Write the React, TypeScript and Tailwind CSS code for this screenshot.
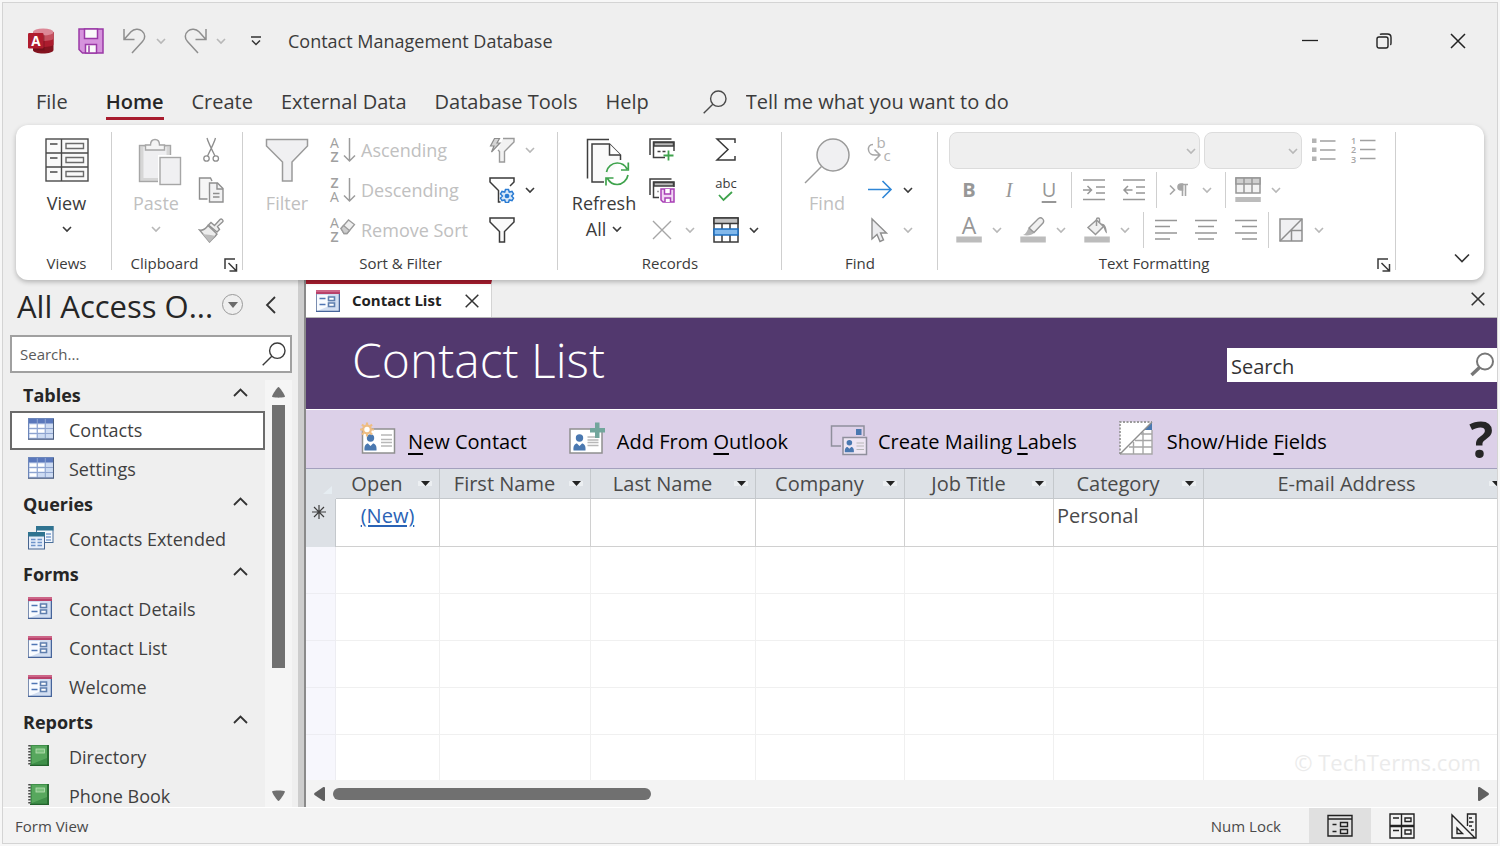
import React, { useState } from 'react';
import clsx from 'clsx';

type IconProps = { className?: string };

const Chevron = ({ className = 'text-[#3b3b3b]' }: IconProps) => (
  <svg width="10" height="10" viewBox="0 0 10 10" fill="none" stroke="currentColor" strokeWidth="1.6" className={clsx('shrink-0', className)}>
    <path d="M1 3l4 4 4-4" />
  </svg>
);

const AccessLogo = () => (
  <svg width="26" height="26" viewBox="0 0 26 26">
    <path d="M5 4v18c0 2 4.500 3.500 10 3.500S25.500 24 25.500 22V4z" fill="#84131f" />
    <path d="M5 4v12.500c0 1.500 4.500 2.500 10 2.500s10.500-1 10.500-2.500V4z" fill="#ac1c2e" />
    <path d="M5 4v6.500C5 12 9.500 13 15 13s10.500-1 10.500-2.500V4z" fill="#c5505f" />
    <ellipse cx="15.200" cy="4" rx="10.300" ry="3.600" fill="#dc8796" />
    <path d="M5 7h11.500v15.500H5z" fill="#5c0d16" opacity=".45" />
    <rect x="0" y="5" width="15.500" height="15.500" rx="1.200" fill="#b01c2e" />
    <text x="7.800" y="17.500" textAnchor="middle" fontSize="13.500" fontWeight="700" fill="#fff">A</text>
  </svg>
);

const SaveIcon = () => (
  <svg width="26" height="26" viewBox="0 0 26 26" stroke="#9a3aa6" strokeWidth="1.500">
    <path d="M1 1h24v24H4.500L1 21.500z" fill="#d693dd" />
    <path d="M6.500 1h13v9.500h-13z" fill="#fafafa" />
    <path d="M7.500 25v-8.500h11V25z" fill="#fafafa" />
    <path d="M11 17.500v7" />
  </svg>
);

const UndoIcon = ({ className }: IconProps) => (
  <svg width="26" height="26" viewBox="0 0 26 26" fill="none" stroke="#8e8e8e" strokeWidth="1.500" className={className}>
    <path d="M2 1v10.500h10.500M2.500 11L9 3.800C12 .8 17 .3 20 3c3.500 3 3.500 7.500.5 10.500L10 25" />
  </svg>
);

const SearchIcon = ({ className }: IconProps) => (
  <svg width="24" height="24" viewBox="0 0 24 24" fill="none" stroke="currentColor" strokeWidth="1.400" className={clsx('shrink-0', className)}>
    <circle cx="15.300" cy="8.700" r="7.700" />
    <path d="M9.800 14.200L.7 23.300" />
  </svg>
);

const ViewIcon = () => (
  <svg width="44" height="44" viewBox="0 0 44 44" fill="none" stroke="#4a4a4a" strokeWidth="1.400">
    <rect x="1" y="1" width="42" height="42" fill="#fafafa" />
    <path d="M16.500 1v42M1 15h42M1 29h42M5 6h7.500M5 20h7.500M5 34h7.500" />
    <path d="M21 5.500h17.500v5H21zM21 19.500h17.500v5H21zM21 33.500h17.500v5H21z" stroke="#6b6b6b" />
  </svg>
);

const PasteIcon = () => (
  <svg width="44" height="48" viewBox="0 0 44 48" fill="none" stroke="#a6a6a6" strokeWidth="1.400" className="-mb-1 ml-2">
    <rect x="1.500" y="7.500" width="31" height="36" fill="#d6d6d6" />
    <rect x="5.500" y="9" width="23" height="31" fill="#efeff1" stroke="none" />
    <path d="M7.500 12V7h5c0-3.500 1.800-5.500 4.500-5.500S21.500 3.500 21.500 7h5v5z" fill="#f4f4f4" />
    <rect x="20" y="17" width="24" height="31" fill="#fff" stroke="none" />
    <rect x="22" y="19.500" width="20.500" height="27" fill="#f0f0f2" />
  </svg>
);

const CutIcon = () => (
  <svg width="26" height="26" viewBox="0 0 26 26" fill="none" stroke="#8e8e8e" strokeWidth="1.300">
    <circle cx="8.500" cy="21.500" r="2.700" />
    <circle cx="17.800" cy="21.500" r="2.700" />
    <path d="M9 1c1 4 3.500 9 8 18M17.500 1c-1 4-3.500 9-8 18" />
  </svg>
);

const CopyIcon = () => (
  <svg width="26" height="26" viewBox="0 0 26 26" fill="none" stroke="#8e8e8e" strokeWidth="1.400">
    <path d="M9.500 22H1.500V1h11l1.500 3" fill="#f6f6f6" />
    <path d="M11.500 6h8l5.500 5.500V25H11.500z" fill="#f2f2f3" />
    <path d="M19 6v6h6M15 16.500h6.500M15 20h6.500" />
  </svg>
);

const BrushIcon = () => (
  <svg width="26" height="26" viewBox="0 0 26 26" fill="none" stroke="#929292" strokeWidth="1.400">
    <path d="M1.500 13c4 1 6-1 8.500-4.500L19 17c-2 3-5 5-7.500 8z" fill="#ececec" />
    <path d="M4.500 17c4 .5 9 1 12.500 2l-5.500 6z" fill="#bcbcbc" stroke="none" />
    <path d="M10.500 8l2.500-2.500 3.500 3L22 2.500c1.500-1.500 4 1 2.500 2.500l-5 4.500 2 3-2.500 2.500z" fill="#efefef" />
  </svg>
);

const FilterBig = () => (
  <svg width="44" height="44" viewBox="0 0 44 44" fill="#f0f0f2" stroke="#9a9a9a" strokeWidth="1.500">
    <path d="M1.500 1.500h41V8L27 24v19h-9.500V24L1.500 8z" />
  </svg>
);

const SortIcon = ({ top, bottom, erase }: { top: string; bottom: string; erase?: boolean }) => (
  <svg width="26" height="28" viewBox="0 0 26 28" fill="#a0a0a0" fontSize="14" className="shrink-0 overflow-visible">
    <text x="4.500" y="12" textAnchor="middle" fontWeight={top === 'Z' ? 600 : 400}>{top}</text>
    <text x="4.500" y="26" textAnchor="middle" fontWeight={bottom === 'Z' ? 600 : 400}>{bottom}</text>
    {erase ? (
      <g stroke="#9c9c9c" strokeWidth="1.300">
        <path d="M11 12.500L18.500 4l6 4.500-7.500 9h-3z" fill="#efefef" />
        <path d="M11 12.500l2.500-3 6 5-2.500 3h-3z" fill="#cdcdcd" />
      </g>
    ) : (
      <path d="M19.500 2v23M14 19.500l5.500 5.500 5.500-5.500" fill="none" stroke="#9c9c9c" strokeWidth="1.500" />
    )}
  </svg>
);

const FilterSmall = ({ kind }: { kind: 'bolt' | 'gear' | 'plain' }) => {
  if (kind === 'bolt') {
    return (
      <svg width="26" height="26" viewBox="0 0 26 26" fill="none" stroke="#9a9a9a" strokeWidth="1.400">
        <path d="M14 1.500h11V5l-9.500 9.500V25h-5V14.500l-1.500-1.500" fill="#f2f2f2" />
        <path d="M5.500 1.500h5L8 6h3L2.500 15l2.500-6H1.500z" fill="#d5d5d5" stroke="#8d8d8d" strokeWidth="1.200" />
      </svg>
    );
  }
  if (kind === 'gear') {
    return (
      <svg width="26" height="26" viewBox="0 0 26 26" fill="none" stroke="#3a3a3a" strokeWidth="1.500">
        <path d="M11.500 25H9.500V13.500L1 5V1h24v4l-4 4" />
        <g stroke="#2b7cd3" strokeWidth="1.500" transform="translate(-.500 .500)">
          <path d="M17 12h3l.8 2.500 2.700-.6 1.500 2.600-1.900 2 1.900 2-1.500 2.600-2.700-.6L20 25h-3l-.8-2.500-2.700.6-1.500-2.600 1.900-2-1.900-2 1.500-2.600 2.700.6z" fill="#d8e8f8" />
          <circle cx="18.500" cy="18.500" r="1.600" fill="#2b7cd3" />
        </g>
      </svg>
    );
  }
  return (
    <svg width="26" height="26" viewBox="0 0 26 26" fill="#fafafa" stroke="#3a3a3a" strokeWidth="1.500">
      <path d="M1 1h24v4l-9.500 9.500V25h-5V14.500L1 5z" />
    </svg>
  );
};

const RefreshIcon = () => (
  <svg width="44" height="48" viewBox="0 0 44 48" fill="none" stroke="#3f3f3f" strokeWidth="1.500" className="-mb-1 ml-2">
    <path d="M1.500 40.500V1.500h21.500" />
    <path d="M18 44H6V6h17.500L34.500 17v5" fill="#fafafa" />
    <path d="M23.500 6V17h11" fill="#fff" />
    <g stroke="#3fa34d" strokeWidth="1.700">
      <path d="M20.500 34c.8-5 5.500-9 10.700-9 4.300 0 8 2.500 9.800 6M42.300 24.500V32H35" />
      <path d="M42 37c-.8 5-5.500 9.500-10.800 9.500-4.200 0-7.700-2.300-9.700-6M20 47.500V40h7.500" />
    </g>
  </svg>
);

const NewRecordIcon = () => (
  <svg width="26" height="26" viewBox="0 0 26 26" fill="none" stroke="#3f3f3f" strokeWidth="1.500">
    <path d="M1 18V2h21.500" />
    <path d="M16 20.500H4.500V5H25v9" fill="#fff" />
    <path d="M5 5.500h19.500V9H5z" fill="#b9b9b9" />
    <path d="M8.500 14.500h3M13.500 14.500h3" />
    <path d="M19.500 13.500v10M14.500 18.500h10" stroke="#3fa34d" strokeWidth="1.800" />
  </svg>
);

const SaveRecordIcon = () => (
  <svg width="26" height="26" viewBox="0 0 26 26" fill="none" stroke="#3f3f3f" strokeWidth="1.500">
    <path d="M1 18V2h21.500" />
    <path d="M10 20.500H4.500V5H25v5" fill="#fff" />
    <path d="M5 5.500h19.500V9H5z" fill="#b9b9b9" />
    <path d="M8.500 14.500h1" />
    <path d="M12 12h13v13H14l-2-2z" fill="#f0d6f3" stroke="#a83fb5" />
    <path d="M15.500 12v5h6v-5M16 25v-4h5.500v4" stroke="#a83fb5" fill="#fff" />
  </svg>
);

const DeleteIcon = () => (
  <svg width="26" height="26" viewBox="0 0 26 26" fill="none" stroke="#a6a6a6" strokeWidth="1.400">
    <path d="M4 4l18 18M22 4L4 22" />
  </svg>
);

const SigmaIcon = () => (
  <svg width="26" height="26" viewBox="0 0 26 26" fill="none" stroke="#3a3a3a" strokeWidth="1.500">
    <path d="M22 6V2H4l11 10.500L4 23h18v-4" />
  </svg>
);

const SpellingIcon = () => (
  <svg width="26" height="28" viewBox="0 0 26 28" fill="none" className="overflow-visible">
    <text x="13" y="12" textAnchor="middle" fontSize="13" fill="#3a3a3a">abc</text>
    <path d="M6 19l4.500 5L19 16" stroke="#3fa34d" strokeWidth="1.800" />
  </svg>
);

const RecordGridIcon = () => (
  <svg width="26" height="26" viewBox="0 0 26 26" fill="#fff" stroke="#3a3a3a" strokeWidth="1.500">
    <rect x="1" y="1" width="24" height="24" />
    <path d="M1 1h24v5.500H1z" fill="#c2c2c2" />
    <path d="M9 6.500V25M17 6.500V25" />
    <path d="M1 12h24v6H1z" fill="#83b9eb" stroke="#1e6fc0" />
  </svg>
);

const FindBig = () => (
  <svg width="46" height="46" viewBox="0 0 46 46" fill="#f0f0f2" stroke="#9a9a9a" strokeWidth="1.500" className="-mb-0.5">
    <circle cx="29" cy="17" r="16" />
    <path d="M17.500 28.500L1 45" />
  </svg>
);

const ReplaceIcon = () => (
  <svg width="26" height="28" viewBox="0 0 26 28" fill="none" className="overflow-visible">
    <text x="14" y="12" textAnchor="middle" fontSize="15" fill="#b0b0b0">b</text>
    <text x="20" y="25" textAnchor="middle" fontSize="15" fill="#b0b0b0">c</text>
    <path d="M6 8.500c-3.500 0-5 2.500-4.500 5.500.4 3 3 5 6 5H12M7.500 13.500L13 19l-5.500 5.500" stroke="#a6a6a6" strokeWidth="1.500" />
  </svg>
);

const GoToIcon = () => (
  <svg width="26" height="26" viewBox="0 0 26 26" fill="none" stroke="#2f86d6" strokeWidth="1.600">
    <path d="M1 12.500h22.500M15.500 4l8.500 8.500-8.500 8.500" />
  </svg>
);

const PointerIcon = () => (
  <svg width="26" height="28" viewBox="0 0 26 28" fill="#ececee" stroke="#8e8e8e" strokeWidth="1.400">
    <path d="M5 3v20l5-4.500 3 7 3.500-1.500-3-7h6z" />
  </svg>
);

const BulletsIcon = () => (
  <svg width="26" height="26" viewBox="0 0 26 26" fill="#b4b4b4" stroke="#a0a0a0" strokeWidth="1.500">
    <path d="M1 1.500h4.500V6H1zM1 10.500h4.500V15H1zM1 19.500h4.500V24H1z" stroke="none" />
    <path d="M9 4h15.500M9 13h15.500M9 22h15.500" />
  </svg>
);

const NumberingIcon = () => (
  <svg width="26" height="28" viewBox="0 0 26 28" fill="#a6a6a6" fontSize="9" fontWeight="600" className="overflow-visible">
    <text x="0" y="8">1</text>
    <text x="0" y="17">2</text>
    <text x="0" y="27">3</text>
    <path d="M9 4.500h15.500M9 13.500h15.500M9 22.500h15.500" stroke="#a0a0a0" strokeWidth="1.500" />
  </svg>
);

const IndentIcon = ({ flip }: { flip?: boolean }) => (
  <svg width="24" height="24" viewBox="0 0 24 24" fill="none" stroke="#979797" strokeWidth="1.500">
    <path d="M1 2h22M14 9h9M14 15h9M1 21.500h22" />
    <path d={flip ? 'M2 12h8.500M6 8l-4 4 4 4' : 'M1 12h8.500M5.500 8l4 4-4 4'} />
  </svg>
);

const AlignIcon = ({ kind }: { kind: 'left' | 'center' | 'right' }) => (
  <svg width="24" height="24" viewBox="0 0 24 24" fill="none" stroke="#979797" strokeWidth="1.500">
    {kind === 'left' && <path d="M1 2.500h22M1 8.500h15M1 15h22M1 21h15" />}
    {kind === 'center' && <path d="M1 2.500h22M4 8.500h16M1 15h22M4 21h16" />}
    {kind === 'right' && <path d="M1 2.500h22M8 8.500h15M1 15h22M8 21h15" />}
  </svg>
);

const ParagraphIcon = () => (
  <svg width="22" height="22" viewBox="0 0 22 22" fill="none" stroke="#a6a6a6" strokeWidth="1.600">
    <path d="M2 6.500l4.500 4.500L2 15.500" />
    <path d="M14.500 17V5.500M17.500 17V5.500M12.500 5.500H20" />
    <path d="M14.500 5h-1.500c-4 0-4 6 0 6h1.500z" fill="#a6a6a6" />
  </svg>
);

const GridlinesIcon = () => (
  <svg width="26" height="26" viewBox="0 0 26 26" fill="none" stroke="#979797" strokeWidth="1.500">
    <rect x="1" y="1" width="24" height="15" fill="#f2f2f2" />
    <path d="M1 1h24v6H1z" fill="#cfcfcf" />
    <path d="M9 1v15M17 1v15" />
    <path d="M.3 20h25.500v5H.3z" fill="#bcbcbc" stroke="none" />
  </svg>
);

const FontColorIcon = () => (
  <svg width="26" height="26" viewBox="0 0 26 26" className="overflow-visible">
    <text x="13" y="17" textAnchor="middle" fontSize="23" fill="#979797">A</text>
    <path d="M.3 19.500h25.500v6H.3z" fill="#bcbcbc" />
  </svg>
);

const HighlightIcon = () => (
  <svg width="26" height="26" viewBox="0 0 26 26" stroke="#979797" strokeWidth="1.400">
    <path d="M3 18c3-1 4-4 5.500-7l5.500 5c-2 2-6 3-11 2z" fill="#b5b5b5" stroke="none" />
    <path d="M9 11L18.500 1.500c3-2 6.500 1.500 4.500 4.500L14 15.500z" fill="#f0f0f0" />
    <path d="M.3 19.500h25.500v6H.3z" fill="#bcbcbc" stroke="none" />
  </svg>
);

const FillIcon = () => (
  <svg width="26" height="26" viewBox="0 0 26 26" stroke="#979797" strokeWidth="1.500" fill="none">
    <path d="M4 10.500L12.500 3l7 6.500-8 8z" fill="#f0f0f0" />
    <path d="M12.500 9V2.500c0-2 3-2 3 0V6" />
    <path d="M17 6.500c4 0 5.500 3 6 10-2-1-2.500-4-3.500-6z" fill="#979797" stroke="none" />
    <path d="M.3 19.500h25.500v6H.3z" fill="#bcbcbc" stroke="none" />
  </svg>
);

const AlternateIcon = () => (
  <svg width="24" height="24" viewBox="0 0 24 24" fill="#f0f0f2" stroke="#8e8e8e" strokeWidth="1.500">
    <rect x="1" y="1" width="22" height="22" />
    <path d="M1 23L23 1M12 12.500h11M12.500 12v11" />
  </svg>
);

const Launcher = ({ label }: { label: string }) => (
  <button aria-label={label} className="flex size-4 items-center justify-center">
    <svg width="14" height="14" viewBox="0 0 14 14" fill="none" stroke="#3a3a3a" strokeWidth="1.500">
      <path d="M1 11V1h10M4.500 5l7.500 7.500M12.500 6v7h-7" />
    </svg>
  </button>
);

const TableIcon = () => (
  <svg width="26" height="22" viewBox="0 0 26 22">
    <rect x=".5" y=".5" width="25" height="20.500" fill="#cbd8ef" stroke="#6c86ba" />
    <path d="M1 1h24v4.500H1z" fill="#5a78bc" />
    <path d="M2 6.500h6.500v3H2zM10 6.500h6.500v3H10zM2 11.500h6.500v3H2zM10 11.500h6.500v3H10zM2 16.500h6.500v3H2z" fill="#fff" />
    <path d="M18 6.500h6v3h-6zM18 11.500h6v3h-6zM10 16.500h6.500v3H10zM18 16.500h6v3h-6z" fill="#cddcf4" />
    <path d="M9.300 1v20M17.300 1v20M1 10.500h24M1 15.500h24" stroke="#8ea4d0" />
    <path d="M0 21.200h26M25.500 1v20" stroke="#4d5f7d" />
  </svg>
);

const QueryIcon = () => (
  <svg width="26" height="24" viewBox="0 0 26 24">
    <rect x="8.500" y=".5" width="16.500" height="16" fill="#f4f8fd" stroke="#4a6f9a" />
    <path d="M8 0h17.500v4.500H8z" fill="#2f7390" />
    <path d="M18 8h5M18 11h5M18 14h5" stroke="#7ea0cf" strokeWidth="1.300" />
    <rect x=".5" y="6.500" width="16" height="16.500" fill="#e6eefa" stroke="#46648f" />
    <path d="M0 6h17v4.500H0z" fill="#2f7390" />
    <path d="M3 13.500h4.500M3 16.500h4.500M3 19.500h4.500M9.500 13.500H14M9.500 16.500H14M9.500 19.500H14" stroke="#6d93c9" strokeWidth="1.300" />
  </svg>
);

const FormIcon = () => (
  <svg width="24" height="22" viewBox="0 0 24 22">
    <rect x=".5" y=".5" width="23" height="21" fill="#d2deF1" stroke="#7a8db0" />
    <path d="M1 5h11v11.500L1 21z" fill="#f8fbff" />
    <path d="M0 0h24v4H0z" fill="#b8416a" />
    <path d="M0 1h24" stroke="#e08aa5" />
    <path d="M3.500 8.500h6M3.500 14.500h6" stroke="#4f76b4" strokeWidth="1.600" />
    <path d="M12.500 7h6v3.500h-6zM12.500 13h6v3.500h-6z" fill="#fff" stroke="#5f7fae" strokeWidth="1.600" />
    <path d="M0 21.500h24M23.500 4v18" stroke="#46649a" strokeWidth="1.500" />
  </svg>
);

const ReportIcon = () => (
  <svg width="21" height="21" viewBox="0 0 21 21">
    <rect x="2.500" y="0" width="18.500" height="21" fill="#3f8f49" />
    <path d="M4 1h15v12L4 19z" fill="#62b067" opacity=".7" />
    <path d="M20 0v21M2 20.500h19" stroke="#23622d" strokeWidth="1.500" />
    <rect x="8" y="4" width="8.500" height="4" fill="#7cc07e" stroke="#b9e0b5" strokeWidth=".8" />
    <path d="M1.500 0v21" stroke="#4a4a4a" strokeWidth="2.500" strokeDasharray="1.500 1.500" />
  </svg>
);

const Person = () => (
  <g fill="#4a78b0">
    <circle cx="10.500" cy="17" r="3.700" />
    <path d="M4.500 29.500c-.5-5 1.500-7 3.500-7l2.500 2.500 2.500-2.500c2 0 4 2 3.500 7z" />
  </g>
);

const NewContactIcon = () => (
  <svg width="36" height="34" viewBox="0 0 36 34" fill="none">
    <rect x="2.500" y="8" width="32" height="24" fill="#fff" stroke="#8f8f8f" strokeWidth="1.500" />
    <Person />
    <path d="M21 14h11M21 18.500h11M21 21.500h11M21 25h11" stroke="#b8b8b8" strokeWidth="1.300" />
    <g stroke="#eebd83" strokeWidth="2.200">
      <circle cx="7" cy="8.500" r="3.800" fill="#fff" />
      <path d="M7 1.500v3M7 12.500v3M0 8.500h3M11 8.500h3M2 3.500l2 2M10 11.500l2 2M12 3.500l-2 2M4 11.500l-2 2" />
    </g>
  </svg>
);

const AddOutlookIcon = () => (
  <svg width="36" height="34" viewBox="0 0 36 34" fill="none">
    <rect x="1" y="8" width="32" height="24" fill="#fff" stroke="#8f8f8f" strokeWidth="1.500" />
    <Person />
    <path d="M18.500 16h10M18.500 19h11M18.500 21.500h11M18.500 24.500h11" stroke="#b8b8b8" strokeWidth="1.300" />
    <path d="M26 1.500h4.500V7H36v4.500h-5.500V17H26v-5.500h-5V7h5z" fill="#72a69c" />
  </svg>
);

const LabelsIcon = () => (
  <svg width="38" height="32" viewBox="0 0 38 32" fill="none" stroke="#8f8f9c" strokeWidth="1.500" className="mt-1">
    <path d="M11 22H1.500V2H34v10" />
    <path d="M26 5h5.500v6H26z" fill="#4a78b0" stroke="none" />
    <rect x="13" y="13.500" width="23.500" height="17" fill="#eee6f3" />
    <g transform="translate(11.500 6) scale(.75)" stroke="none"><Person /></g>
    <path d="M26.500 19H34M26.500 22H34M26.500 25.500H34" stroke="#b8b8b8" strokeWidth="1.200" />
  </svg>
);

const FieldsIcon = () => (
  <svg width="34" height="34" viewBox="0 0 34 34" fill="none">
    <path d="M1 1h32v32H1z" fill="#fff" />
    <path d="M1 33V1h32" stroke="#9a9a9a" strokeWidth="1.800" strokeDasharray="2 1.500" />
    <path d="M33 1v8h-8z" fill="#4a78b0" />
    <path d="M33 9v24H1M22 13h11M16 19.500h17M10 26h23M14.500 21v12M24 11v22" stroke="#a6a6a6" strokeWidth="1.400" />
    <path d="M1 33L33 1" stroke="#8f8f8f" strokeWidth="1.500" />
  </svg>
);

/* ---------- ribbon parts ---------- */

const Group = ({ label, className, launcher, children }: { label: string; className: string; launcher?: boolean; children: React.ReactNode }) => (
  <section aria-label={label} className={clsx('relative flex shrink-0 flex-col pt-[5px]', className)}>
    <div className="h-[120px]">{children}</div>
    <div className={clsx('h-7 text-center text-[15px] leading-[26px] text-[#3b3b3b]', launcher && 'pr-[26px]')}>{label}</div>
    {launcher && (
      <div className="absolute right-1 bottom-[7px]">
        <Launcher label={`${label} options`} />
      </div>
    )}
    <div className="absolute top-[7px] right-0 h-[138px] w-px bg-[#cfcfcf]" />
  </section>
);

const BigButton = ({ icon, label, className, disabled, children }: { icon: React.ReactNode; label: string; className?: string; disabled?: boolean; children?: React.ReactNode }) => (
  <button
    disabled={disabled}
    className={clsx('flex h-[120px] flex-col items-center pt-2 text-[18px] leading-[26px]', disabled ? 'text-[#c0c0c0]' : 'text-[#3b3b3b]', className)}
  >
    {icon}
    <span className="mt-2">{label}</span>
    {children}
  </button>
);

const Tool = ({ label, drop, disabled, children }: { label: string; drop?: boolean; disabled?: boolean; children: React.ReactNode }) => (
  <button aria-label={label} disabled={disabled} className="flex h-10 shrink-0 items-center">
    <span className="flex w-10 justify-center">{children}</span>
    {drop && (
      <span className="mr-2 flex w-4 justify-center">
        <Chevron className={disabled ? 'text-[#b8b8b8]' : 'text-[#3b3b3b]'} />
      </span>
    )}
  </button>
);

const Sep = () => <div className="mx-0.5 h-9 w-px bg-[#cfcfcf]" />;

const SortButton = ({ label, icon }: { label: string; icon: React.ReactNode }) => (
  <button disabled className="flex h-10 items-center gap-[5px] text-[18px] text-[#c0c0c0]">
    {icon}
    {label}
  </button>
);

const FontSelect = ({ label, className }: { label: string; className: string }) => (
  <div className={clsx('relative h-[37px]', className)}>
    <select aria-label={label} disabled className="size-full appearance-none rounded-lg border border-[#dcdcdc] bg-[#efefef]">
      <option></option>
    </select>
    <Chevron className="absolute top-3.5 right-1 text-[#b8b8b8]" />
  </div>
);

const Ribbon = () => (
  <div className="relative z-10 mx-[13px] flex h-[155px] shrink-0 overflow-hidden rounded-xl bg-white shadow-[0_2px_5px_rgba(0,0,0,0.25)]">
    <Group label="Views" className="w-[96px] pl-[5px]">
      <BigButton label="View" icon={<ViewIcon />} className="mx-auto w-[60px]">
        <span className="flex h-[26px] items-center"><Chevron /></span>
      </BigButton>
    </Group>

    <Group label="Clipboard" className="w-[131px]" launcher>
      <div className="flex gap-[5px] pl-[14px]">
        <BigButton label="Paste" icon={<PasteIcon />} className="w-[60px]" disabled>
          <span className="flex h-[26px] items-center"><Chevron className="text-[#b8b8b8]" /></span>
        </BigButton>
        <div>
          <Tool label="Cut" disabled><CutIcon /></Tool>
          <Tool label="Copy" disabled><CopyIcon /></Tool>
          <Tool label="Format Painter" disabled><BrushIcon /></Tool>
        </div>
      </div>
    </Group>

    <Group label="Sort & Filter" className="w-[315px]">
      <div className="flex pl-[14px]">
        <BigButton label="Filter" icon={<FilterBig />} className="mr-[13px] w-[60px]" disabled />
        <div className="w-[152px]">
          <SortButton label="Ascending" icon={<SortIcon top="A" bottom="Z" />} />
          <SortButton label="Descending" icon={<SortIcon top="Z" bottom="A" />} />
          <SortButton label="Remove Sort" icon={<SortIcon top="A" bottom="Z" erase />} />
        </div>
        <div>
          <Tool label="Selection" drop disabled><FilterSmall kind="bolt" /></Tool>
          <Tool label="Advanced" drop><FilterSmall kind="gear" /></Tool>
          <Tool label="Toggle Filter"><FilterSmall kind="plain" /></Tool>
        </div>
      </div>
    </Group>

    <Group label="Records" className="w-[224px]">
      <div className="flex pl-2">
        <BigButton label="Refresh" icon={<RefreshIcon />} className="w-[76px]">
          <span className="flex items-center gap-1.5">All <Chevron /></span>
        </BigButton>
        <div>
          <Tool label="New"><NewRecordIcon /></Tool>
          <Tool label="Save"><SaveRecordIcon /></Tool>
          <Tool label="Delete" drop disabled><DeleteIcon /></Tool>
        </div>
        <div>
          <Tool label="Totals"><SigmaIcon /></Tool>
          <Tool label="Spelling"><SpellingIcon /></Tool>
          <Tool label="More" drop><RecordGridIcon /></Tool>
        </div>
      </div>
    </Group>

    <Group label="Find" className="w-[156px]">
      <div className="flex gap-[3px] pl-[15px]">
        <BigButton label="Find" icon={<FindBig />} className="w-[60px]" disabled />
        <div>
          <Tool label="Replace" disabled><ReplaceIcon /></Tool>
          <Tool label="Go To" drop><GoToIcon /></Tool>
          <Tool label="Select" drop disabled><PointerIcon /></Tool>
        </div>
      </div>
    </Group>

    <Group label="Text Formatting" className="w-[458px]" launcher>
      <div className="pl-[11px]">
        <div className="flex h-10 items-center">
          <FontSelect label="Font" className="w-[251px]" />
          <FontSelect label="Font Size" className="mr-0.5 ml-1 w-[98px]" />
          <Tool label="Bullets" disabled><BulletsIcon /></Tool>
          <Tool label="Numbering" disabled><NumberingIcon /></Tool>
        </div>
        <div className="flex h-10 items-center text-[20px] leading-9 text-[#979797]">
          <Tool label="Bold" disabled><b>B</b></Tool>
          <Tool label="Italic" disabled><i className="font-['Liberation_Serif',serif]">I</i></Tool>
          <Tool label="Underline" disabled><span className="underline underline-offset-4">U</span></Tool>
          <Sep />
          <Tool label="Increase Indent" disabled><IndentIcon /></Tool>
          <Tool label="Decrease Indent" disabled><IndentIcon flip /></Tool>
          <Sep />
          <Tool label="Text Direction" drop disabled><ParagraphIcon /></Tool>
          <Sep />
          <Tool label="Gridlines" drop disabled><GridlinesIcon /></Tool>
        </div>
        <div className="flex h-10 items-center">
          <Tool label="Font Color" drop disabled><FontColorIcon /></Tool>
          <Tool label="Highlight" drop disabled><HighlightIcon /></Tool>
          <Tool label="Background Color" drop disabled><FillIcon /></Tool>
          <Sep />
          <Tool label="Align Left" disabled><AlignIcon kind="left" /></Tool>
          <Tool label="Center" disabled><AlignIcon kind="center" /></Tool>
          <Tool label="Align Right" disabled><AlignIcon kind="right" /></Tool>
          <Sep />
          <Tool label="Alternate Row Color" drop disabled><AlternateIcon /></Tool>
        </div>
      </div>
    </Group>

    <div className="flex flex-1 items-end justify-end pr-3 pb-3">
      <button aria-label="Collapse the Ribbon" className="p-0.5">
        <svg width="16" height="16" viewBox="0 0 16 16" fill="none" stroke="#333" strokeWidth="1.600">
          <path d="M1 4.500l7 7 7-7" />
        </svg>
      </button>
    </div>
  </div>
);

/* ---------- title bar and tabs ---------- */

const TitleBar = () => (
  <header className="flex h-[76px] shrink-0 items-center pr-0.5 pl-[25px]">
    <AccessLogo />
    <button aria-label="Save" className="ml-6"><SaveIcon /></button>
    <button aria-label="Undo" disabled className="ml-[18px] flex items-center gap-2">
      <UndoIcon />
      <Chevron className="text-[#b8b8b8]" />
    </button>
    <button aria-label="Redo" disabled className="ml-4 flex items-center gap-2">
      <UndoIcon className="-scale-x-100" />
      <Chevron className="text-[#b8b8b8]" />
    </button>
    <button aria-label="Customize Quick Access Toolbar" className="ml-6">
      <svg width="12" height="12" viewBox="0 0 12 12" fill="none" stroke="#333" strokeWidth="1.500">
        <path d="M1 2h10M2 5.500l4 4 4-4" />
      </svg>
    </button>
    <h1 className="ml-[26px] text-[18px] text-[#3b3b3b]">Contact Management Database</h1>
    <div className="ml-auto flex">
      <button aria-label="Minimize" className="flex h-10 w-[74px] items-center justify-center">
        <svg width="16" height="16" viewBox="0 0 16 16" fill="none" stroke="#222" strokeWidth="1.300"><path d="M0 7.500h16" /></svg>
      </button>
      <button aria-label="Restore" className="flex h-10 w-[74px] items-center justify-center">
        <svg width="16" height="16" viewBox="0 0 16 16" fill="none" stroke="#222" strokeWidth="1.400">
          <rect x="1" y="4" width="11" height="11" rx="2" />
          <path d="M4 1.500C4.500 1 5 1 6 1h5.500C14 1 15 2 15 4.500V10c0 1 0 1.500-.6 2" />
        </svg>
      </button>
      <button aria-label="Close" className="flex h-10 w-[74px] items-center justify-center">
        <svg width="16" height="16" viewBox="0 0 16 16" fill="none" stroke="#222" strokeWidth="1.500"><path d="M1 1l14 14M15 1L1 15" /></svg>
      </button>
    </div>
  </header>
);

const tabs = ['File', 'Home', 'Create', 'External Data', 'Database Tools', 'Help'];

const RibbonTabs = () => {
  const [active, setActive] = useState('Home');
  return (
    <nav className="flex h-[46px] shrink-0 items-start gap-7 pt-2 pl-[33px] text-[20px] leading-[30px] text-[#3b3b3b]">
      {tabs.map((tab) => (
        <button
          key={tab}
          onClick={() => setActive(tab)}
          className={clsx('border-b-3', tab === 'File' && 'mr-2.5', active === tab ? 'border-[#a81c2e] font-semibold text-[#262626]' : 'border-transparent')}
        >
          {tab}
        </button>
      ))}
      <label className="ml-[26px] flex flex-1 items-center gap-[19px]">
        <SearchIcon className="text-[#4a4a4a]" />
        <input aria-label="Tell me what you want to do" placeholder="Tell me what you want to do" className="w-[300px] bg-transparent outline-none placeholder:text-[#3b3b3b]" />
      </label>
    </nav>
  );
};

/* ---------- navigation pane ---------- */

const navGroups = [
  { title: 'Tables', icon: <TableIcon />, items: ['Contacts', 'Settings'] },
  { title: 'Queries', icon: <QueryIcon />, items: ['Contacts Extended'] },
  { title: 'Forms', icon: <FormIcon />, items: ['Contact Details', 'Contact List', 'Welcome'] },
  { title: 'Reports', icon: <ReportIcon />, items: ['Directory', 'Phone Book'] },
];

const NavPane = () => {
  const [selected, setSelected] = useState('Contacts');
  return (
    <aside className="flex w-[295px] shrink-0 flex-col pr-1.5">
      <div className="flex h-[55px] items-center pb-1 pl-3.5">
        <h2 className="w-[205px] text-[31px] leading-[50px] text-[#262626]">All Access O...</h2>
        <button aria-label="Choose category" className="-mt-0.5 flex size-[21px] shrink-0 items-center justify-center rounded-full border border-[#9a9a9a]">
          <svg width="10" height="6" viewBox="0 0 10 6"><path d="M0 0h10L5 6z" fill="#6b6b6b" /></svg>
        </button>
        <button aria-label="Shutter Bar Close" className="-mt-0.5 ml-[22px]">
          <svg width="12" height="18" viewBox="0 0 12 18" fill="none" stroke="#333" strokeWidth="1.800"><path d="M10 1L2 9l8 8" /></svg>
        </button>
      </div>
      <label className="ml-[7px] flex h-[38px] shrink-0 items-center border-2 border-[#a0a0a0] bg-white pr-1 pl-2">
        <input aria-label="Search objects" placeholder="Search..." className="min-w-0 flex-1 text-[15px] outline-none placeholder:text-[#5a5a5a]" />
        <SearchIcon className="text-[#3b3b3b]" />
      </label>
      <div className="mt-[7px] flex min-h-0 flex-1">
        <div className="flex-1 overflow-hidden pl-[7px]">
          {navGroups.map((group) => (
            <section key={group.title}>
              <button className="flex h-[31px] w-full items-center justify-between pr-[17px] pl-[13px] text-[18px] font-bold text-[#262626]">
                {group.title}
                <svg width="15" height="15" viewBox="0 0 15 15" fill="none" stroke="#333" strokeWidth="1.800" className="-mt-1.5"><path d="M1 11l6.500-6.500L14 11" /></svg>
              </button>
              {group.items.map((item) => (
                <button
                  key={item}
                  onClick={() => setSelected(item)}
                  className={clsx('flex h-[39px] w-full items-center border-2 pl-4 text-left text-[18px] text-[#3f3f3f]', selected === item ? 'border-[#6b6b6b] bg-white' : 'border-transparent')}
                >
                  <span className="-mt-1 w-[41px]">{group.icon}</span>
                  {item}
                </button>
              ))}
            </section>
          ))}
        </div>
        <div className="flex w-[27px] flex-col items-center bg-[#f5f5f5] pt-[7px] pb-1.5">
          <svg width="13" height="11" viewBox="0 0 13 11" className="shrink-0"><path d="M6.500 0c1 0 6.500 8 6.500 9.500 0 1.500-13 1.500-13 0C0 8 5.500 0 6.500 0z" fill="#707070" /></svg>
          <div className="mt-[7px] h-[263px] w-[13px] bg-[#707070]" />
          <svg width="13" height="11" viewBox="0 0 13 11" className="mt-auto shrink-0"><path d="M6.500 11C7.500 11 13 3 13 1.500 13 0 0 0 0 1.500 0 3 5.500 11 6.500 11z" fill="#707070" /></svg>
        </div>
      </div>
    </aside>
  );
};

/* ---------- form ---------- */

const actions = [
  { icon: <NewContactIcon />, before: '', hot: 'N', after: 'ew Contact' },
  { icon: <AddOutlookIcon />, before: 'Add From ', hot: 'O', after: 'utlook' },
  { icon: <LabelsIcon />, before: 'Create Mailing ', hot: 'L', after: 'abels' },
  { icon: <FieldsIcon />, before: 'Show/Hide ', hot: 'F', after: 'ields' },
];

const columns = [
  { name: 'Open', width: 'w-[104px]' },
  { name: 'First Name', width: 'w-[151px]' },
  { name: 'Last Name', width: 'w-[165px]' },
  { name: 'Company', width: 'w-[149px]' },
  { name: 'Job Title', width: 'w-[149px]' },
  { name: 'Category', width: 'w-[150px]' },
  { name: 'E-mail Address', width: '' },
];

const Datasheet = () => (
  <div className="relative min-h-0 flex-1 overflow-hidden bg-white">
    <table className="w-[calc(100%+14px)] table-fixed border-separate border-spacing-0 text-[20px] text-[#4a4a4a]">
      <thead>
        <tr className="h-[30px] bg-[#dde1e6]">
          <th aria-label="Record selector" className="w-[30px] p-0 align-bottom">
            <svg width="10" height="10" viewBox="0 0 10 10" className="mb-1 ml-4"><path d="M10 1v8H1z" fill="#e6edf2" /></svg>
          </th>
          {columns.map((col) => (
            <th key={col.name} className={clsx('border-r border-b border-[#c4c8cc] p-0 font-normal', col.width)}>
              <div className="flex items-center pr-[7px] leading-7">
                <span className="flex-1 text-center">{col.name}</span>
                <button aria-label={`Filter ${col.name}`} className="flex w-3.5 justify-center bg-[#eceff2]">
                  <svg width="9" height="5" viewBox="0 0 9 5"><path d="M0 0h9L4.500 5z" fill="#222" /></svg>
                </button>
              </div>
            </th>
          ))}
        </tr>
      </thead>
      <tbody>
        <tr className="h-12">
          <td className="border-r border-[#c4c8cc] bg-[#dde1e6] p-0 pl-1.5 align-top">
            <svg width="14" height="26" viewBox="0 0 14 26" stroke="#3f3f3f" strokeWidth="1.200"><path d="M7 6v14M0 13h14M2 8l10 10M12 8L2 18" /></svg>
          </td>
          {columns.map((col) => (
            <td key={col.name} className="border-r border-b border-[#d0d0d0] p-0 px-[3px] align-top leading-[34px]">
              {col.name === 'Open' && <a href="#new" className="block text-center text-[#2a63b5] underline underline-offset-2">(New)</a>}
              {col.name === 'Category' && 'Personal'}
            </td>
          ))}
        </tr>
        {[0, 1, 2, 3, 4, 5, 6, 7].map((row) => (
          <tr key={row} className="h-[47px]">
            <td className="border-r border-b border-[#ededf2] bg-[#f7f7fd] p-0" />
            {columns.map((col) => (
              <td key={col.name} className="border-r border-b border-[#f0f0f0] p-0" />
            ))}
          </tr>
        ))}
      </tbody>
    </table>
    <div className="absolute right-4 bottom-0.5 text-[22px] leading-8 font-medium text-[#ebebeb]">© TechTerms.com</div>
  </div>
);

const FormWindow = () => (
  <main className="flex min-w-0 flex-1 flex-col overflow-hidden border-l-2 border-[#8a8a8a]">
    <div className="flex h-[38px] shrink-0 items-stretch justify-between border-b border-[#b5b5b5]">
      <div className="flex items-center border-t-4 border-r border-[#a81c2e] border-r-[#d4d4d4] bg-white pr-2.5 pl-2.5 text-[15px] font-bold text-[#222]">
        <FormIcon />
        <span className="mx-3">Contact List</span>
        <button aria-label="Close tab" className="ml-2.5 p-0.5">
          <svg width="14" height="14" viewBox="0 0 14 14" fill="none" stroke="#333" strokeWidth="1.500"><path d="M.7.7l12.600 12.600M13.300.7L.7 13.300" /></svg>
        </button>
      </div>
      <button aria-label="Close object" className="mr-3">
        <svg width="14" height="14" viewBox="0 0 14 14" fill="none" stroke="#333" strokeWidth="1.600"><path d="M.7.7l12.600 12.600M13.300.7L.7 13.300" /></svg>
      </button>
    </div>
    <div className="flex h-[91px] shrink-0 items-center justify-between bg-[#52386e] pl-[46px]">
      <h2 className="pb-2 text-[48px] leading-[80px] font-light text-white">Contact List</h2>
      <label className="mt-0.5 flex h-[34px] w-[270px] items-center bg-white pr-0.5 pl-1 text-[20px]">
        <input aria-label="Search contacts" placeholder="Search" className="min-w-0 flex-1 pt-1 outline-none placeholder:text-[#333]" />
        <svg width="25" height="25" viewBox="0 0 25 25" fill="none" stroke="#777">
          <circle cx="15" cy="9.500" r="8" strokeWidth="2" />
          <path d="M9.500 15.500L1.500 23" strokeWidth="3.500" />
        </svg>
      </label>
    </div>
    <div className="flex h-[60px] shrink-0 items-center border-t border-b border-t-white border-b-[#a3a0bd] bg-[#dcd0e8] pl-[54px] text-[20px] text-black">
      <div className="flex gap-[42px] pt-1.5">
        {actions.map((action) => (
          <button key={action.after} className="flex items-center gap-3 whitespace-nowrap">
            <span className="-mt-2 w-9">{action.icon}</span>
            <span>{action.before}<u className="underline-offset-4">{action.hot}</u>{action.after}</span>
          </button>
        ))}
      </div>
      <button aria-label="Help" className="mr-1 ml-auto text-[50px] leading-[50px] font-bold text-[#262626]">?</button>
    </div>
    <Datasheet />
    <div className="flex h-[27px] shrink-0 items-center bg-[#f3f3f3] px-2">
      <svg width="11" height="14" viewBox="0 0 11 14"><path d="M11 1v12c0 1-1 1.300-2 .7L.5 8C0 7.500 0 6.500.5 6L9 .3c1-.6 2-.3 2 .7z" fill="#606060" /></svg>
      <div className="mx-2 flex-1">
        <div className="h-3 w-[28%] rounded-full bg-[#707070]" />
      </div>
      <svg width="11" height="14" viewBox="0 0 11 14"><path d="M0 1v12c0 1 1 1.300 2 .7L10.500 8c.5-.5.5-1.500 0-2L2 .3C1-.3 0 0 0 1z" fill="#606060" /></svg>
    </div>
  </main>
);

/* ---------- status bar ---------- */

const StatusBar = () => {
  const [view, setView] = useState('Form View');
  const views = [
    {
      name: 'Form View',
      icon: <path d="M1 2.500h24v20.500H1zM1 6h24M5.500 11.500h4M5.500 18.500h4M13.500 9.500h7v4h-7zM13.500 16.500h7v4h-7z" />,
    },
    {
      name: 'Layout View',
      icon: <path d="M1 1h24v24H1zM12.500 1v24M1 12.500h24M1 13.500h24M4 5h6M4 17.500h6M16 5h6v3.500h-6zM16 17h6v4h-6z" />,
    },
    {
      name: 'Design View',
      icon: <path d="M1 2v23h23zM6 15v5.500h5.500zM16.500 13V1H25v24h-1M18 5h3M18 9h4.500M18 13h3M20 17h3" />,
    },
  ];
  return (
    <footer className="flex h-9 shrink-0 items-stretch border-t border-white bg-[#f3f3f3] pr-0.5 pl-3 text-[15px] text-[#4a4a4a]">
      <span className="leading-9">{view}</span>
      <span className="mr-7 ml-auto leading-9">Num Lock</span>
      {views.map(({ name, icon }) => (
        <button key={name} aria-label={name} onClick={() => setView(name)} className={clsx('flex w-[62px] items-center justify-center', view === name && 'bg-[#e0e0e0]')}>
          <svg width="26" height="26" viewBox="0 0 26 26" fill="none" stroke="#222" strokeWidth="1.400">{icon}</svg>
        </button>
      ))}
    </footer>
  );
};

export default function App() {
  return (
    <div className="h-screen bg-[#f7f7f7] p-0.5 font-['Open_Sans','Noto_Sans',sans-serif]">
      <div className="flex h-full flex-col overflow-hidden border border-[#d4d4d4] bg-[#efefef]">
        <TitleBar />
        <RibbonTabs />
        <Ribbon />
        <div className="flex min-h-0 flex-1">
          <NavPane />
          <div className="w-1.5 shrink-0 bg-[#cdcdcd]" />
          <FormWindow />
        </div>
        <StatusBar />
      </div>
    </div>
  );
}
